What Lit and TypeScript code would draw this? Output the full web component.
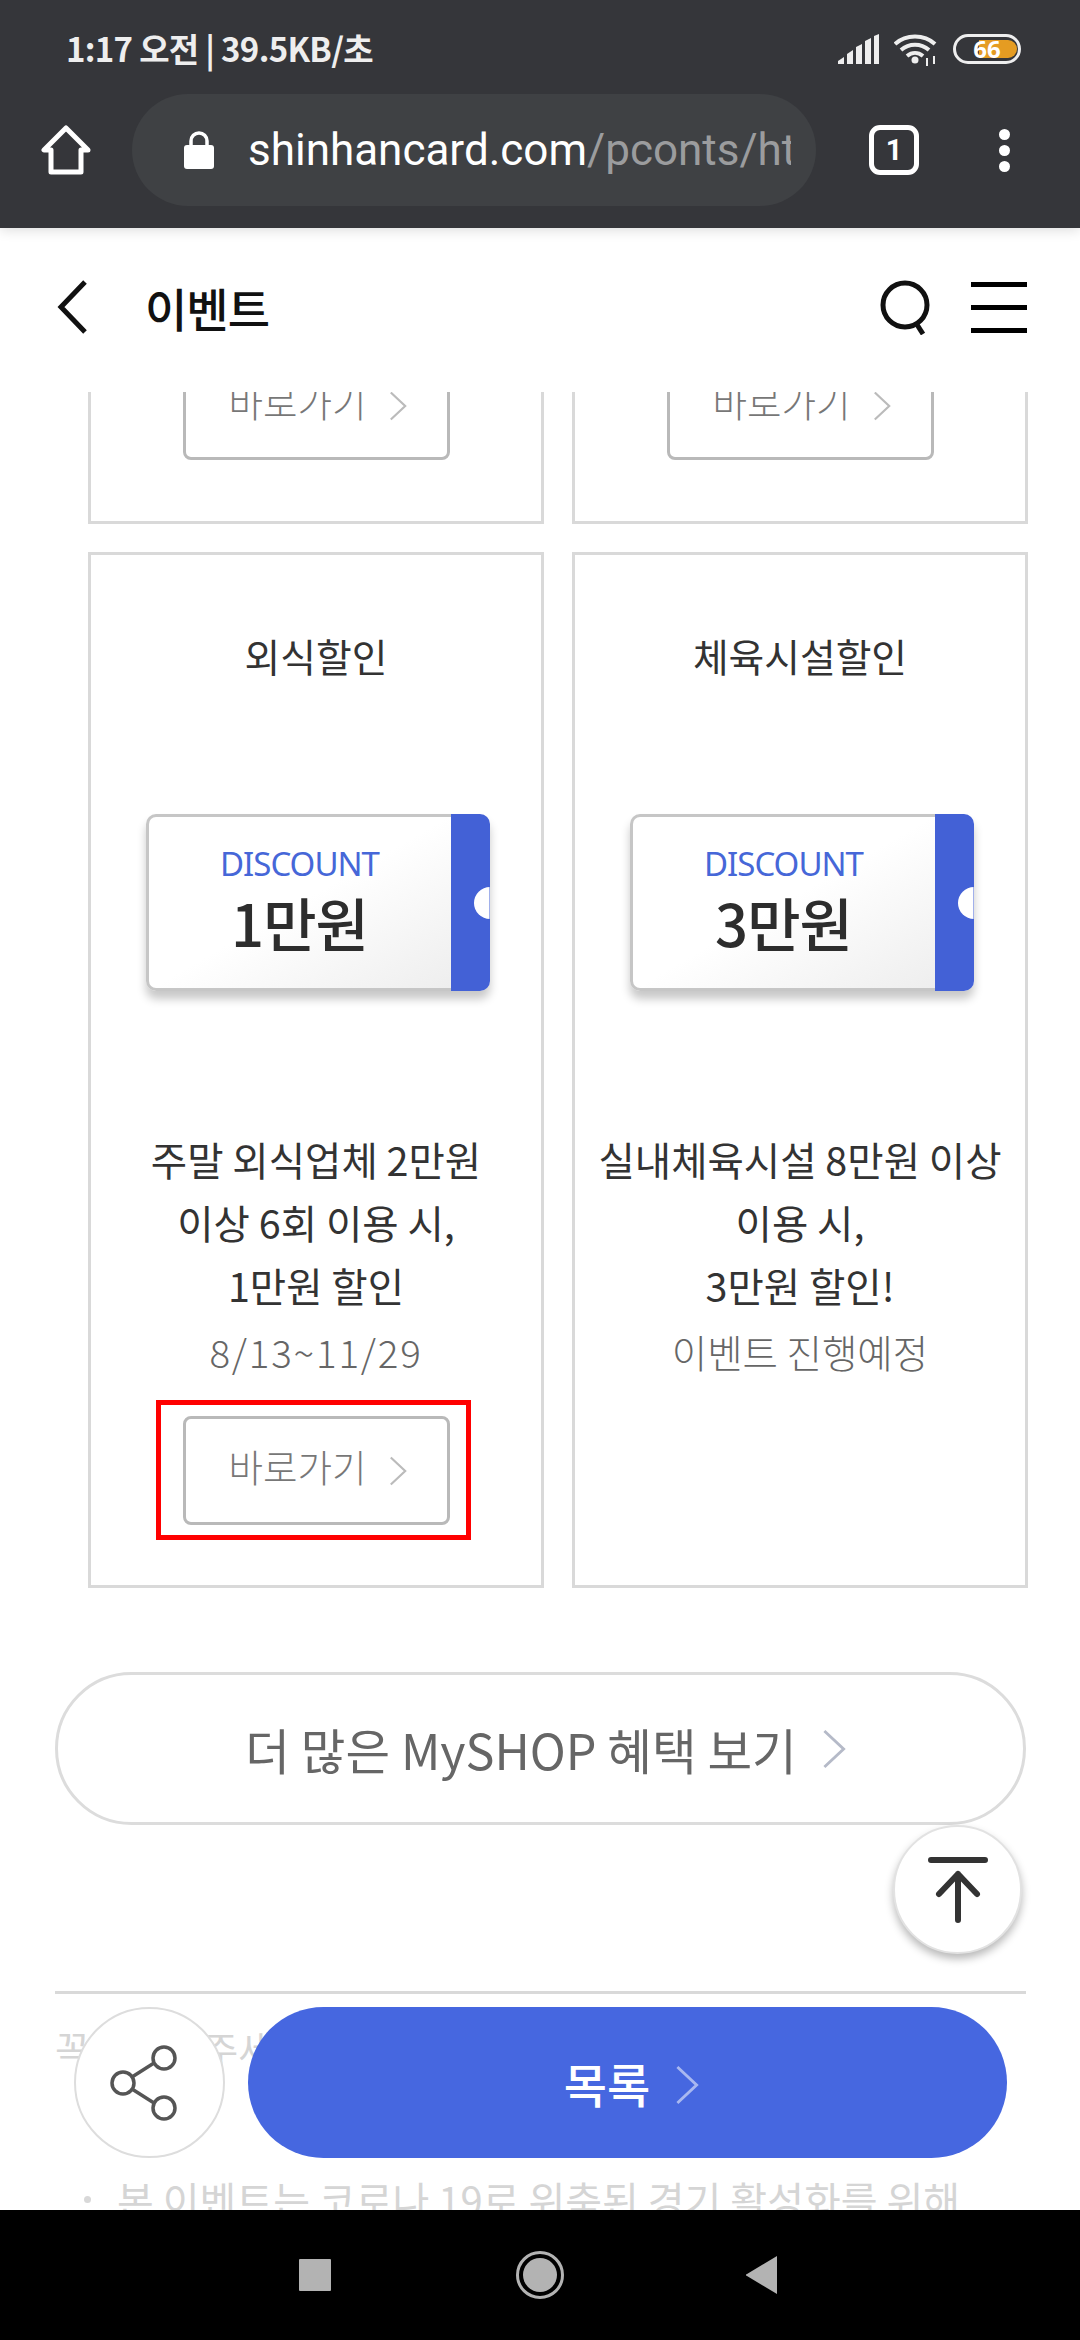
import { LitElement, html, css } from 'lit';
import { customElement } from 'lit/decorators.js';

const chevron = () => html`<svg viewBox="0 0 20 32" fill="none" stroke="currentColor" stroke-width="2.4"><path d="M2 1l16 15L2 31"/></svg>`;

@customElement('app-root')
export class AppRoot extends LitElement {
  static styles = css`
    :host {
      display: block;
      width: 1080px;
      height: 2340px;
      background: #fff;
      font-family: "Noto Sans CJK KR", "Noto Sans", sans-serif;
      color: #333;
    }
    .page { display: flex; flex-direction: column; height: 2340px; position: relative; overflow: hidden; }

    .chrome { height: 228px; background: #35363a; color: #fff; flex: none; box-sizing: border-box; padding: 0 60px 0 41px; position: relative; z-index: 3; box-shadow: 0 2px 12px rgba(0,0,0,.14); }
    .status { height: 94px; display: flex; align-items: flex-start; justify-content: space-between; padding: 28px 0 0 25px; box-sizing: border-box; color: #eee; }
    .clock { font: 700 33px/40px "Noto Sans CJK KR", sans-serif; letter-spacing: -0.7px; }
    .sys { display: flex; gap: 15px; margin-right: -1px; padding-top: 6px; }
    .toolbar { display: flex; align-items: center; height: 112px; }
    .home { width: 50px; height: 50px; flex: none; }
    .omni { margin-left: 41px; width: 684px; height: 112px; border-radius: 56px; background: #3f4144; display: flex; align-items: center; box-sizing: border-box; padding: 0 25px 0 52px; flex: none; }
    .lock { width: 30px; height: 38px; flex: none; margin-right: 34px; }
    .url { font: 400 44px/60px Roboto, sans-serif; white-space: nowrap; overflow: hidden; color: #fff; flex: 1; }
    .url span { color: #9b9c9e; }
    .tab { margin-left: 53px; width: 50px; height: 50px; border: 5px solid #fff; border-radius: 11px; box-sizing: border-box; display: flex; align-items: center; justify-content: center; font: 700 29px/1 Roboto, sans-serif; flex: none; }
    .dots { margin-left: 80px; display: flex; flex-direction: column; gap: 5px; }
    .dots i { width: 11px; height: 11px; border-radius: 50%; background: #fff; display: block; }

    .head { height: 164px; flex: none; display: flex; align-items: center; box-sizing: border-box; padding: 0 53px 6px 57px; background: #fff; position: relative; z-index: 2; }
    .back { width: 30px; height: 54px; flex: none; }
    .title { margin-left: 58px; font: 500 46px/60px "Noto Sans CJK KR", sans-serif; color: #111; flex: 1; letter-spacing: -1px; }
    .search { width: 52px; height: 56px; flex: none; }
    .burger { margin-left: 39px; width: 56px; display: flex; flex-direction: column; gap: 18px; flex: none; }
    .burger i { height: 5px; background: #000; display: block; }

    .content { flex: 1; min-height: 0; overflow: hidden; padding: 0 54px 0 55px; }
    .grid { display: grid; grid-template-columns: 456px 456px; column-gap: 28px; row-gap: 28px; padding-left: 33px; margin-top: -904px; width: 940px; box-sizing: border-box; }
    .card { height: 1036px; border: 3px solid #d9d9d9; box-sizing: border-box; display: flex; flex-direction: column; align-items: center; text-align: center; padding-top: 75px; }
    .card.clip { justify-content: flex-end; padding: 0 0 46px; }
    .name { font: 400 38.8px/50px "Noto Sans CJK KR", sans-serif; color: #333; }
    .ticket { margin: 134px 0 0 3px; width: 344px; height: 177px; display: flex; border-radius: 10px; position: relative; box-shadow: 0 8px 10px rgba(0,0,0,.22); flex: none; }
    .stub-left { flex: 1; border: 3px solid #c6c6c6; border-right: 0; border-radius: 10px 0 0 10px; background: linear-gradient(150deg, #fff 50%, #eee 100%); display: flex; flex-direction: column; align-items: center; box-sizing: border-box; padding-top: 28px; }
    .disc { font: 400 33px/38px "Noto Sans", sans-serif; color: #4667d8; letter-spacing: -1px; margin-bottom: 2px; }
    .amt { font: 500 58px/74px "Noto Sans CJK KR", sans-serif; color: #2d2d2d; letter-spacing: -1px; }
    .stub-right { width: 39px; background: #4361d6; border-radius: 0 10px 10px 0; flex: none; }
    .notch { position: absolute; right: -16px; top: 73px; width: 32px; height: 32px; border-radius: 50%; background: #fff; clip-path: inset(0 16px 0 0); }
    .desc { margin-top: 136px; font: 400 39.5px/63px "Noto Sans CJK KR", sans-serif; color: #333; white-space: pre-line; height: 189px; }
    .date { font: 300 38.5px/44px "Noto Sans CJK KR", sans-serif; color: #666; margin-top: 13px; height: 44px; }
    .date.num { letter-spacing: 1.8px; }
    .go-wrap { margin-top: 27px; padding: 11px 16px 10px 22px; border: 5px solid transparent; }
    .go-wrap.on { border-color: #f00; margin-left: -6px; }
    .go { width: 267px; height: 109px; border: 3px solid #b9b9b9; border-radius: 8px; box-sizing: border-box; display: flex; align-items: flex-start; justify-content: center; gap: 22px; padding: 25px 0 0 3px; color: #777; background: #fff; font: 300 37.5px/44px "Noto Sans CJK KR", sans-serif; }
    .go svg { width: 18px; height: 30px; color: #bbb; margin-top: 12px; }
    .card.clip .go-wrap { margin: 0 0 0 -6px; }

    .more { margin: 84px 0 0; height: 153px; border: 3px solid #dcdcdc; border-radius: 77px; box-sizing: border-box; display: flex; align-items: center; justify-content: center; gap: 25px; padding-left: 10px; font: 400 48.5px/60px "Noto Sans CJK KR", sans-serif; color: #666; width: 971px; }
    .more svg { width: 24px; height: 40px; color: #b5bac8; }
    .rule { margin-top: 166px; height: 3px; background: #d9d9d9; width: 971px; }
    .note { font: 400 38px/50px "Noto Sans CJK KR", sans-serif; color: #d5d5d5; margin-top: 29px; white-space: nowrap; }
    .bullet { font: 400 40px/50px "Noto Sans CJK KR", sans-serif; color: #d5d5d5; margin: 101px 0 0 29px; white-space: nowrap; display: flex; gap: 26px; align-items: center; }
    .bullet i { width: 7px; height: 7px; background: #d8d8d8; border-radius: 50%; display: block; }

    .top-btn { position: absolute; left: 893px; top: 1825px; width: 129px; height: 129px; border-radius: 50%; background: #fff; border: 2px solid #e2e2e2; box-sizing: border-box; box-shadow: 0 5px 8px rgba(0,0,0,.28); z-index: 2; display: flex; align-items: center; justify-content: center; }
    .top-btn svg { width: 60px; height: 66px; }
    .share { position: absolute; left: 74px; top: 2007px; width: 151px; height: 151px; border-radius: 50%; background: #fff; border: 2px solid #ddd; box-sizing: border-box; display: flex; align-items: center; justify-content: center; z-index: 2; }
    .share svg { width: 76px; height: 76px; margin-right: 8px; }
    .list { position: absolute; left: 248px; top: 2007px; width: 759px; height: 151px; border-radius: 76px; background: #4667e0; box-sizing: border-box; padding-left: 8px; display: flex; align-items: center; justify-content: center; gap: 25px; color: #fff; font: 500 47px/60px "Noto Sans CJK KR", sans-serif; z-index: 2; }
    .list svg { width: 24px; height: 40px; color: #a9b8f0; margin-top: 4px; }

    .nav { height: 130px; background: #000; flex: none; display: flex; align-items: center; justify-content: center; position: relative; z-index: 3; padding-right: 4px; }
    .nav .sq { width: 32px; height: 32px; background: #b3b3b3; border-radius: 1px; }
    .nav .ci { margin-left: 185px; width: 48px; height: 48px; }
    .nav .tr { margin-left: 181px; width: 32px; height: 38px; }
  `;

  private card(name: string, amt: string, desc: string, date: string, on = false) {
    return html`
      <div class="card">
        <div class="name">${name}</div>
        <div class="ticket">
          <div class="stub-left">
            <div class="disc">DISCOUNT</div>
            <div class="amt">${amt}</div>
          </div>
          <div class="stub-right"></div>
          <div class="notch"></div>
        </div>
        <div class="desc">${desc}</div>
        <div class="date ${on ? 'num' : ''}">${date}</div>
        ${on ? html`<div class="go-wrap on"><div class="go">바로가기 ${chevron()}</div></div>` : ''}
      </div>`;
  }

  private clipped() {
    return html`<div class="card clip"><div class="go-wrap"><div class="go">바로가기 ${chevron()}</div></div></div>`;
  }

  render() {
    return html`
      <div class="page">
        <div class="chrome">
          <div class="status">
            <div class="clock">1:17 오전 | 39.5KB/초</div>
            <div class="sys">
              <svg width="41" height="30" viewBox="0 0 41 30" fill="#eee">
                <path d="M0 30v-3l6-4v7zM9 30V20l6-4v14zM18 30V13l6-3v20zM27 30V7l6-3v26zM36 30V2l5-2v30z"/>
              </svg>
              <svg width="44" height="32" viewBox="0 0 44 32" fill="none" stroke="#eee" stroke-width="4">
                <path d="M1 10c11-10 29-10 40 0M7 16c8-7 20-7 28 0M13 22c5-4 11-4 16 0"/>
                <circle cx="21" cy="26" r="3.5" fill="#eee" stroke="none"/>
                <path d="M33 24v8M40 22v8" stroke-width="2"/>
              </svg>
              <svg width="68" height="30" viewBox="0 0 68 30">
                <rect x="1.5" y="1.5" width="65" height="27" rx="13.5" fill="none" stroke="#eee" stroke-width="3"/>
                <path d="M26 6h29a9 9 0 0 1 0 18H26z" fill="#e59c22"/>
                <text x="34" y="24" text-anchor="middle" font-family="Open Sans" font-weight="700" font-size="24" fill="#fff">66</text>
              </svg>
            </div>
          </div>
          <div class="toolbar">
            <svg class="home" viewBox="0 0 50 50" fill="none" stroke="#fff" stroke-width="5" stroke-linejoin="round"><path d="M25 3L3 25h7v22h30V25h7z"/></svg>
            <div class="omni">
              <svg class="lock" viewBox="0 0 30 38"><path d="M7 16V10a8 8 0 0 1 16 0v6" fill="none" stroke="#fff" stroke-width="3.5"/><rect x="0" y="14" width="30" height="24" rx="3" fill="#fff"/></svg>
              <div class="url">shinhancard.com<span>/pconts/html/benefit</span></div>
            </div>
            <div class="tab">1</div>
            <div class="dots"><i></i><i></i><i></i></div>
          </div>
        </div>

        <div class="head">
          <svg class="back" viewBox="0 0 30 54" fill="none" stroke="#111" stroke-width="5"><path d="M28 2L4 27l24 25"/></svg>
          <div class="title">이벤트</div>
          <svg class="search" viewBox="0 0 52 56" fill="none" stroke="#111" stroke-width="5"><circle cx="25" cy="26" r="22"/><path d="M36 44l7 11"/></svg>
          <div class="burger"><i></i><i></i><i></i></div>
        </div>

        <div class="content">
          <div class="grid">
            ${this.clipped()}${this.clipped()}
            ${this.card('외식할인', '1만원', '주말 외식업체 2만원\n이상 6회 이용 시,\n1만원 할인', '8/13~11/29', true)}
            ${this.card('체육시설할인', '3만원', '실내체육시설 8만원 이상\n이용 시,\n3만원 할인!', '이벤트 진행예정')}
          </div>
          <div class="more">더 많은 MySHOP 혜택 보기 ${chevron()}</div>
          <div class="rule"></div>
          <div class="note">꼭 확인해주세요</div>
          <div class="bullet"><i></i>본 이벤트는 코로나 19로 위축된 경기 활성화를 위해</div>
        </div>

        <div class="top-btn">
          <svg viewBox="0 0 60 66" fill="none" stroke="#333" stroke-width="6" stroke-linecap="round" stroke-linejoin="round"><path d="M3 3h54M30 63V17M11 37l19-20 19 20"/></svg>
        </div>
        <div class="share">
          <svg viewBox="0 0 76 76" fill="none" stroke="#555" stroke-width="3.5"><circle cx="56" cy="13" r="11"/><circle cx="15" cy="38" r="11"/><circle cx="56" cy="63" r="11"/><path d="M24 32l22-14M24 44l22 14"/></svg>
        </div>
        <div class="list">목록 ${chevron()}</div>

        <div class="nav">
          <div class="sq"></div>
          <svg class="ci" viewBox="0 0 48 48"><circle cx="24" cy="24" r="22.5" fill="none" stroke="#b3b3b3" stroke-width="3"/><circle cx="24" cy="24" r="17" fill="#b3b3b3"/></svg>
          <svg class="tr" viewBox="0 0 32 38"><path d="M32 0v38L2 20a1 1 0 0 1 0-2z" fill="#b3b3b3"/></svg>
        </div>
      </div>
    `;
  }
}
